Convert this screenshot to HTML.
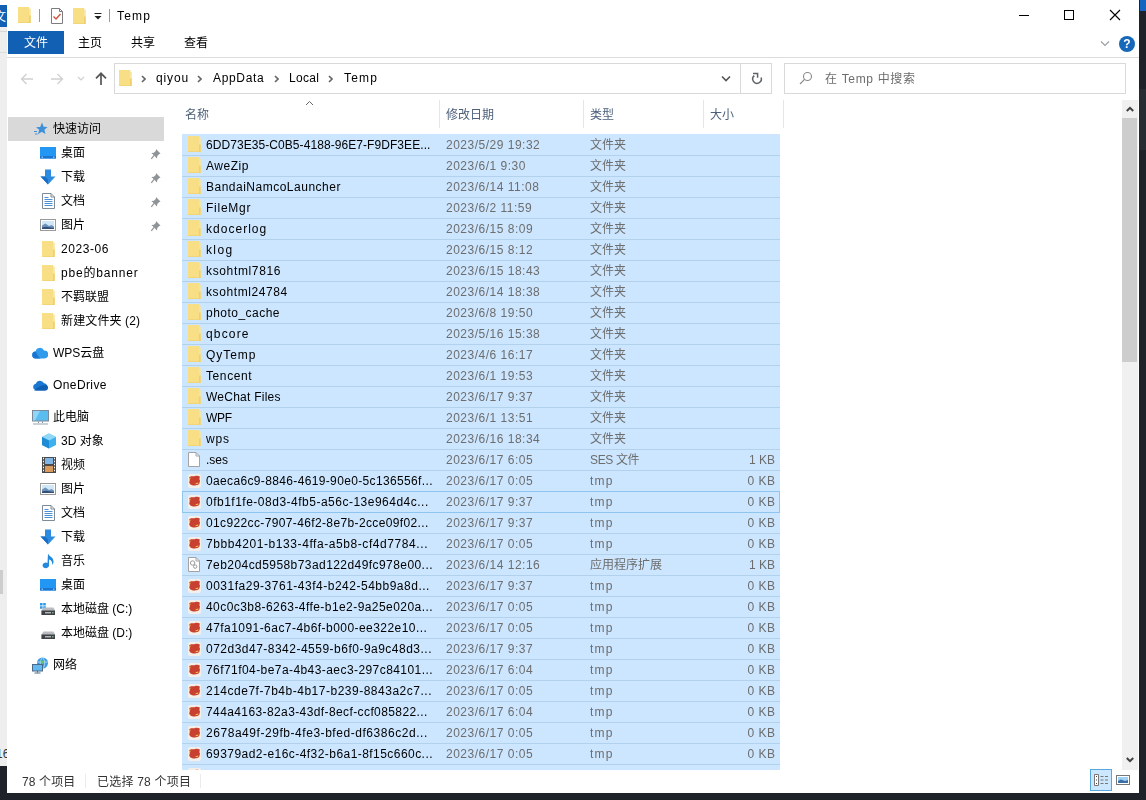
<!DOCTYPE html>
<html lang="zh-CN"><head><meta charset="utf-8"><title>Temp</title>
<style>
html,body{margin:0;padding:0}
body{width:1146px;height:800px;overflow:hidden;position:relative;background:#1f2228;font-family:"Liberation Sans","Noto Sans CJK SC",sans-serif;font-size:12px;color:#000}
div,span,svg{position:absolute;box-sizing:border-box}
.t{white-space:nowrap;line-height:16px;height:16px}
.ic{display:block}
#win{left:7px;top:0;width:1132px;height:793px;background:#fff;overflow:hidden;will-change:transform}
.row{left:176px;width:598px;height:21px;background:#cce6ff}
.sep{left:14px;width:598px;height:1px;background:#b2d1ec}
.row .n{left:24px;top:3px;color:#000}
.row .d{left:264px;top:3px;color:#6d6d6d;letter-spacing:.5px}
.row .y{left:408px;top:3px;color:#6d6d6d}
.row .s{right:5px;top:3px;color:#6d6d6d}
.nav{left:0;width:156px;height:24px}
.nav .t{top:4px}
.hd{top:107px;color:#4c607a}
.vs{top:100px;width:1px;height:28px;background:#e5e5e5}
</style></head><body>

<div style="left:0;top:0;width:7px;height:766px;background:#eeeeee"></div>
<div style="left:0;top:0;width:7px;height:5px;background:#fff"></div>
<div style="left:0;top:5px;width:7px;height:22px;background:#1260b4;overflow:hidden"><span class="t" style="left:-6px;top:4px;color:#fff;font-size:12px">文</span></div>
<div style="left:0;top:31px;width:7px;height:1px;background:#d8d8d8"></div>
<div style="left:0;top:52px;width:7px;height:1px;background:#dcdcdc"></div>
<div style="left:0;top:570px;width:3px;height:24px;background:#cdcdcd"></div>
<div style="left:0;top:748px;width:7px;height:12px;overflow:hidden"><span class="t" style="left:-4px;top:-2px;color:#333;font-size:12px">16</span></div>
<div style="left:1140px;top:0;width:6px;height:11px;background:#1565c0"></div>
<div style="left:1139px;top:89px;width:7px;height:61px;background:#272b32"></div>
<div id="win">
<svg class="ic" style="left:11px;top:7px" width="13" height="16" viewBox="0 0 13 16"><path d="M0 0h11.200v16h-11.200z" fill="#f8df86"/><path d="M11.200 1.500h0.800l0.700 .700v13.800h-1.500z" fill="#f8e295"/><path d="M11 8.500h1.700v7.500h-1.700z" fill="#f1d06a"/><path d="M0 15.300h12.700v.700h-12.700z" fill="#f0d273"/></svg>
<div style="left:32px;top:9px;width:1px;height:13px;background:#9a9a9a"></div>
<svg class="ic" style="left:44px;top:8px" width="12" height="16" viewBox="0 0 12 16"><path d="M0.5 0.5h8l3 3v12h-11z" fill="#fff" stroke="#7d7d7d"/><path d="M8.5 0.5v3h3" fill="none" stroke="#7d7d7d"/><path d="M2.5 8.5l2.5 2.5l4.5-5" fill="none" stroke="#d0503a" stroke-width="1.4"/></svg>
<svg class="ic" style="left:66px;top:8px" width="13" height="16" viewBox="0 0 13 16"><path d="M0 0h11.200v16h-11.200z" fill="#f8df86"/><path d="M11.200 1.500h0.800l0.700 .700v13.800h-1.500z" fill="#f8e295"/><path d="M11 8.500h1.700v7.500h-1.700z" fill="#f1d06a"/><path d="M0 15.300h12.700v.700h-12.700z" fill="#f0d273"/></svg>
<svg class="ic" style="left:87px;top:13px" width="8" height="8" viewBox="0 0 8 8"><path d="M0.5 0.5h7" stroke="#222" stroke-width="1"/><path d="M0.5 3h7l-3.5 3.5z" fill="#222"/></svg>
<div style="left:102px;top:9px;width:1px;height:13px;background:#9a9a9a"></div>
<span class="t" style="left:110px;top:8px;letter-spacing:1.219px">Temp</span>
<svg class="ic" style="left:1011px;top:9px" width="12" height="12" viewBox="0 0 12 12"><path d="M1 6.500h10" stroke="#000" stroke-width="1"/></svg>
<svg class="ic" style="left:1056px;top:9px" width="12" height="12" viewBox="0 0 12 12"><rect x="1.5" y="1.5" width="9" height="9" fill="none" stroke="#000" stroke-width="1"/></svg>
<svg class="ic" style="left:1102px;top:9px" width="12" height="12" viewBox="0 0 12 12"><path d="M1 1l10 10M11 1l-10 10" stroke="#000" stroke-width="1.1"/></svg>
<div style="left:1px;top:31px;width:56px;height:23px;background:#1260b4"></div>
<span class="t" style="left:17px;top:35px;color:#fff">文件</span>
<span class="t" style="left:71px;top:35px">主页</span>
<span class="t" style="left:124px;top:35px">共享</span>
<span class="t" style="left:177px;top:35px">查看</span>
<svg class="ic" style="left:1093px;top:40px" width="10" height="8" viewBox="0 0 10 8"><path d="M1 1.5l4 4l4-4" fill="none" stroke="#9aa0a8" stroke-width="1.2"/></svg>
<div style="left:1112px;top:36px;width:16px;height:16px;border-radius:50%;background:#1668b8;color:#fff;font-weight:bold;font-size:12px;line-height:16px;text-align:center"><span class="t" style="position:static;">?</span></div>
<div style="left:0;top:57px;width:1132px;height:1px;background:#dcdcdc"></div>
<svg class="ic" style="left:13px;top:72px" width="14" height="14" viewBox="0 0 14 14"><path d="M13 7H1.5M6.5 2L1.5 7l5 5" fill="none" stroke="#d0d0d0" stroke-width="1.3"/></svg>
<svg class="ic" style="left:43px;top:72px" width="14" height="14" viewBox="0 0 14 14"><path d="M1 7h11.5M7.5 2l5 5l-5 5" fill="none" stroke="#d0d0d0" stroke-width="1.3"/></svg>
<svg class="ic" style="left:70px;top:76px" width="8" height="6" viewBox="0 0 8 6"><path d="M1 1l3 3l3-3" fill="none" stroke="#d0d0d0" stroke-width="1.2"/></svg>
<svg class="ic" style="left:87px;top:71px" width="14" height="15" viewBox="0 0 14 15"><path d="M7 14V2.500M2 7.300l5-5l5 5" fill="none" stroke="#555" stroke-width="1.700"/></svg>
<div style="left:107px;top:63px;width:627px;height:31px;border:1px solid #d9d9d9;background:#fff"></div>
<div style="left:733px;top:63px;width:32px;height:31px;border:1px solid #d9d9d9;background:#fff"></div>
<svg class="ic" style="left:112px;top:70px" width="13" height="16" viewBox="0 0 13 16"><path d="M0 0h11.200v16h-11.200z" fill="#f8df86"/><path d="M11.200 1.500h0.800l0.700 .700v13.800h-1.500z" fill="#f8e295"/><path d="M11 8.500h1.700v7.500h-1.700z" fill="#f1d06a"/><path d="M0 15.300h12.700v.700h-12.700z" fill="#f0d273"/></svg>
<svg class="ic" style="left:134px;top:75px" width="5" height="8" viewBox="0 0 5 8"><path d="M1 1l3 3l-3 3" fill="none" stroke="#666" stroke-width="1.600"/></svg>
<span class="t" style="left:149px;top:70px;letter-spacing:0.853px">qiyou</span>
<svg class="ic" style="left:190px;top:75px" width="5" height="8" viewBox="0 0 5 8"><path d="M1 1l3 3l-3 3" fill="none" stroke="#666" stroke-width="1.600"/></svg>
<span class="t" style="left:206px;top:70px;letter-spacing:0.667px">AppData</span>
<svg class="ic" style="left:267px;top:75px" width="5" height="8" viewBox="0 0 5 8"><path d="M1 1l3 3l-3 3" fill="none" stroke="#666" stroke-width="1.600"/></svg>
<span class="t" style="left:282px;top:70px;letter-spacing:0.328px">Local</span>
<svg class="ic" style="left:321px;top:75px" width="5" height="8" viewBox="0 0 5 8"><path d="M1 1l3 3l-3 3" fill="none" stroke="#666" stroke-width="1.600"/></svg>
<span class="t" style="left:337px;top:70px;letter-spacing:1.219px">Temp</span>
<svg class="ic" style="left:714px;top:75px" width="10" height="8" viewBox="0 0 10 8"><path d="M1 1.5l4 4l4-4" fill="none" stroke="#555" stroke-width="1.6"/></svg>
<svg class="ic" style="left:743px;top:70px" width="14" height="16" viewBox="0 0 14 16"><path d="M4.300 5.700A4.300 4.300 0 1 0 11.100 7.600" fill="none" stroke="#5f6368" stroke-width="1.500"/><path d="M3 3.500h4.600v4.200" fill="none" stroke="#5f6368" stroke-width="1.500"/></svg>
<div style="left:777px;top:63px;width:342px;height:31px;border:1px solid #d9d9d9;background:#fff"></div>
<svg class="ic" style="left:791.5px;top:70.500px" width="14" height="14" viewBox="0 0 14 14"><circle cx="8.5" cy="5.5" r="4" fill="none" stroke="#8a8a8a" stroke-width="1.1"/><path d="M5.6 8.4L1 13" stroke="#8a8a8a" stroke-width="1.2"/></svg>
<span class="t" style="left:818px;top:71px;color:#6d6d6d;letter-spacing:0.665px">在 Temp 中搜索</span>
<span class="t hd" style="left:178px">名称</span>
<span class="t hd" style="left:439px">修改日期</span>
<span class="t hd" style="left:583px">类型</span>
<span class="t hd" style="left:703px">大小</span>
<div class="vs" style="left:432px"></div>
<div class="vs" style="left:576px"></div>
<div class="vs" style="left:696px"></div>
<div class="vs" style="left:776px"></div>
<svg class="ic" style="left:298px;top:100px" width="9" height="6" viewBox="0 0 9 6"><path d="M1 5l3.500-3.500L8 5" fill="none" stroke="#666" stroke-width="1"/></svg>
<div style="left:1px;top:117px;width:156px;height:23.500px;background:#d9d9d9"></div>
<svg class="ic" style="left:27px;top:122px" width="14" height="14" viewBox="0 0 14 14"><path d="M8 0.5l1.6 4.2l4 .3l-3.2 2.8l1 4.3l-3.6-2.3l-3.8 2.4l1.2-4.4l-3.2-2.6l4.2-.3z" fill="#3d8fd9"/><path d="M0 9.5h3M1 12h2.5" stroke="#3d8fd9" stroke-width="1"/></svg>
<span class="t" style="left:46px;top:121px">快速访问</span>
<svg class="ic" style="left:33px;top:147px" width="16" height="12" viewBox="0 0 16 12"><rect x="0" y="0" width="16" height="11.500" fill="#2196f3"/><rect x="0" y="9" width="16" height="2.500" fill="#1976d2"/><path d="M1.500 10.200h1.500M13 10.200h1.500" stroke="#e3f2fd" stroke-width="0.800"/></svg>
<span class="t" style="left:54px;top:145px">桌面</span>
<svg class="ic" style="left:143px;top:148px" width="12" height="12" viewBox="0 0 11 12"><path d="M5.5 1l4.5 4.5l-1.2.6l-2 2l-.3 2.4l-5.5-5.5l2.4-.3l2-2z" fill="#909498"/><path d="M3.6 7.400L0.800 10.800" stroke="#909498" stroke-width="1.200"/></svg>
<svg class="ic" style="left:33px;top:169px" width="16" height="16" viewBox="0 0 16 16"><path d="M5 0.5h6v7h4.5l-7.5 8l-7.5-8h4.500z" fill="#2f8be0"/><path d="M8 15.500l-7.500-8h4.500l3 3z" fill="#1a6fc4"/></svg>
<span class="t" style="left:54px;top:169px">下载</span>
<svg class="ic" style="left:143px;top:172px" width="12" height="12" viewBox="0 0 11 12"><path d="M5.5 1l4.5 4.5l-1.2.6l-2 2l-.3 2.4l-5.5-5.5l2.4-.3l2-2z" fill="#909498"/><path d="M3.6 7.400L0.800 10.800" stroke="#909498" stroke-width="1.200"/></svg>
<svg class="ic" style="left:35px;top:193px" width="13" height="16" viewBox="0 0 13 16"><path d="M0.5 0.5h8.500l3.500 3.500v11.500h-12z" fill="#fff" stroke="#7f8a96"/><path d="M9 0.5v3.500h3.500" fill="none" stroke="#7f8a96"/><path d="M2.500 4.500h4M2.500 6.500h8M2.500 8.500h8M2.500 10.500h8M2.500 12.500h8" stroke="#4a90d9"/></svg>
<span class="t" style="left:54px;top:193px">文档</span>
<svg class="ic" style="left:143px;top:196px" width="12" height="12" viewBox="0 0 11 12"><path d="M5.5 1l4.5 4.5l-1.2.6l-2 2l-.3 2.4l-5.5-5.5l2.4-.3l2-2z" fill="#909498"/><path d="M3.6 7.400L0.800 10.800" stroke="#909498" stroke-width="1.200"/></svg>
<svg class="ic" style="left:33px;top:219px" width="16" height="12" viewBox="0 0 16 12"><rect x="0.500" y="0.500" width="15" height="11" fill="#fff" stroke="#9a9a9a"/><rect x="2" y="2" width="12" height="8" fill="#cfe7f7"/><path d="M2 10V6.500l3.500-2l3.500 2.500l2.500-1l2.500 1.500v2.500z" fill="#6f93b8"/><path d="M2 10v-1.500l4-.8l8 1.300v1z" fill="#2f4f78"/></svg>
<span class="t" style="left:54px;top:217px">图片</span>
<svg class="ic" style="left:143px;top:220px" width="12" height="12" viewBox="0 0 11 12"><path d="M5.5 1l4.5 4.5l-1.2.6l-2 2l-.3 2.4l-5.5-5.5l2.4-.3l2-2z" fill="#909498"/><path d="M3.6 7.400L0.800 10.800" stroke="#909498" stroke-width="1.200"/></svg>
<svg class="ic" style="left:35px;top:241px" width="13" height="16" viewBox="0 0 13 16"><path d="M0 0h11.200v16h-11.200z" fill="#f8df86"/><path d="M11.200 1.500h0.800l0.700 .700v13.800h-1.500z" fill="#f8e295"/><path d="M11 8.500h1.700v7.500h-1.700z" fill="#f1d06a"/><path d="M0 15.300h12.700v.700h-12.700z" fill="#f0d273"/></svg>
<span class="t" style="left:54px;top:241px;letter-spacing:0.577px">2023-06</span>
<svg class="ic" style="left:35px;top:265px" width="13" height="16" viewBox="0 0 13 16"><path d="M0 0h11.200v16h-11.200z" fill="#f8df86"/><path d="M11.200 1.500h0.800l0.700 .700v13.800h-1.500z" fill="#f8e295"/><path d="M11 8.500h1.700v7.500h-1.700z" fill="#f1d06a"/><path d="M0 15.300h12.700v.700h-12.700z" fill="#f0d273"/></svg>
<span class="t" style="left:54px;top:265px;letter-spacing:0.813px">pbe的banner</span>
<svg class="ic" style="left:35px;top:289px" width="13" height="16" viewBox="0 0 13 16"><path d="M0 0h11.200v16h-11.200z" fill="#f8df86"/><path d="M11.200 1.500h0.800l0.700 .700v13.800h-1.500z" fill="#f8e295"/><path d="M11 8.500h1.700v7.500h-1.700z" fill="#f1d06a"/><path d="M0 15.300h12.700v.700h-12.700z" fill="#f0d273"/></svg>
<span class="t" style="left:54px;top:289px">不羁联盟</span>
<svg class="ic" style="left:35px;top:313px" width="13" height="16" viewBox="0 0 13 16"><path d="M0 0h11.200v16h-11.200z" fill="#f8df86"/><path d="M11.200 1.500h0.800l0.700 .700v13.800h-1.500z" fill="#f8e295"/><path d="M11 8.500h1.700v7.500h-1.700z" fill="#f1d06a"/><path d="M0 15.300h12.700v.700h-12.700z" fill="#f0d273"/></svg>
<span class="t" style="left:54px;top:313px;letter-spacing:0.125px">新建文件夹 (2)</span>
<svg class="ic" style="left:25px;top:347px" width="16" height="12" viewBox="0 0 16 12"><path d="M4 11.500a3.500 3.500 0 0 1-.5-7A4.500 4.500 0 0 1 12 3.500a4 4 0 0 1 .5 8z" fill="#2f9bea"/><path d="M4 11.500a3.500 3.500 0 0 1-.5-7c1.500 1 1.500 4.500 5 7z" fill="#1b74cf"/></svg>
<span class="t" style="left:46px;top:345px">WPS云盘</span>
<svg class="ic" style="left:25px;top:380px" width="17" height="11" viewBox="0 0 17 11"><path d="M4 10.500a3.500 3.500 0 0 1-.3-6.800A4.500 4.500 0 0 1 12 3.200a3.800 3.800 0 0 1 1 7.300z" fill="#1a78d2"/><path d="M2 10.500h12a3 3 0 0 0 .5-5.500c-3-.5-8 1-12.500 5.500z" fill="#0f5fb3"/></svg>
<span class="t" style="left:46px;top:377px;letter-spacing:0.402px">OneDrive</span>
<svg class="ic" style="left:25px;top:410px" width="17" height="15" viewBox="0 0 17 15"><rect x="0.500" y="0.500" width="16" height="10.500" fill="#5bbcf0" stroke="#7a8a99"/><path d="M1 1h7l-5 9.500h-2z" fill="#8fd6f8"/><path d="M6.500 11.500v1.500M10.500 11.500v1.500" stroke="#8a96a3"/><path d="M1 14h15" stroke="#9aa4ae"/></svg>
<span class="t" style="left:46px;top:409px">此电脑</span>
<svg class="ic" style="left:34px;top:433px" width="16" height="16" viewBox="0 0 16 16"><path d="M8 0.500l7 3.500v8l-7 3.500l-7-3.500v-8z" fill="#3db1ee"/><path d="M8 0.500l7 3.500l-7 3.500l-7-3.500z" fill="#8fd8f8"/><path d="M8 7.500v8l-7-3.500v-8z" fill="#1e8bd4"/></svg>
<span class="t" style="left:54px;top:433px">3D 对象</span>
<svg class="ic" style="left:35px;top:457px" width="14" height="16" viewBox="0 0 14 16"><rect x="0" y="0" width="14" height="16" fill="#4a4a4a"/><rect x="3" y="1" width="8" height="6" fill="#7fb6e6"/><rect x="3" y="9" width="8" height="6" fill="#d99a5b"/><path d="M1 1.500h1M1 4.500h1M1 7.500h1M1 10.500h1M1 13.500h1M12 1.500h1M12 4.500h1M12 7.500h1M12 10.500h1M12 13.500h1" stroke="#fff" stroke-width="1.500"/></svg>
<span class="t" style="left:54px;top:457px">视频</span>
<svg class="ic" style="left:33px;top:483px" width="16" height="12" viewBox="0 0 16 12"><rect x="0.500" y="0.500" width="15" height="11" fill="#fff" stroke="#9a9a9a"/><rect x="2" y="2" width="12" height="8" fill="#cfe7f7"/><path d="M2 10V6.500l3.500-2l3.500 2.500l2.500-1l2.500 1.500v2.500z" fill="#6f93b8"/><path d="M2 10v-1.500l4-.8l8 1.300v1z" fill="#2f4f78"/></svg>
<span class="t" style="left:54px;top:481px">图片</span>
<svg class="ic" style="left:35px;top:505px" width="13" height="16" viewBox="0 0 13 16"><path d="M0.5 0.5h8.500l3.500 3.500v11.500h-12z" fill="#fff" stroke="#7f8a96"/><path d="M9 0.5v3.500h3.500" fill="none" stroke="#7f8a96"/><path d="M2.500 4.500h4M2.500 6.500h8M2.500 8.500h8M2.500 10.500h8M2.500 12.500h8" stroke="#4a90d9"/></svg>
<span class="t" style="left:54px;top:505px">文档</span>
<svg class="ic" style="left:33px;top:529px" width="16" height="16" viewBox="0 0 16 16"><path d="M5 0.5h6v7h4.5l-7.5 8l-7.5-8h4.500z" fill="#2f8be0"/><path d="M8 15.500l-7.500-8h4.500l3 3z" fill="#1a6fc4"/></svg>
<span class="t" style="left:54px;top:529px">下载</span>
<svg class="ic" style="left:35px;top:553px" width="13" height="16" viewBox="0 0 13 16"><path d="M6 0.500c1 3 5.500 3.500 5.500 8c0 1.500-.5 2.500-1.500 3.500c.8-3-1-5-3-5.500v6a3.200 2.800 0 1 1-1.500-2.500z" fill="#2389dc"/></svg>
<span class="t" style="left:54px;top:553px">音乐</span>
<svg class="ic" style="left:33px;top:579px" width="16" height="12" viewBox="0 0 16 12"><rect x="0" y="0" width="16" height="11.500" fill="#2196f3"/><rect x="0" y="9" width="16" height="2.500" fill="#1976d2"/><path d="M1.500 10.200h1.500M13 10.200h1.500" stroke="#e3f2fd" stroke-width="0.800"/></svg>
<span class="t" style="left:54px;top:577px">桌面</span>
<svg class="ic" style="left:33px;top:603px" width="16" height="13" viewBox="0 0 16 13"><path d="M0 0h2.600v2.600h-2.600zM3.200 0h2.600v2.600h-2.600zM0 3.200h2.600v2.600h-2.600zM3.200 3.200h2.600v2.600h-2.600z" fill="#2e9be8"/><path d="M3.500 4.500h10l1.500 3v4.500h-13.500v-4.500z" fill="#b8bcc0"/><rect x="1.500" y="7.500" width="13.500" height="4.500" fill="#3e4247"/><rect x="5" y="9.300" width="6" height="1" fill="#e8e8e8"/><rect x="12" y="9.300" width="1.500" height="1" fill="#9fe08a"/></svg>
<span class="t" style="left:54px;top:601px">本地磁盘 (C:)</span>
<svg class="ic" style="left:33px;top:631px" width="16" height="9" viewBox="0 0 16 9"><path d="M3.500 0.500h10l1.500 3v4.500h-13.500v-4.500z" fill="#b8bcc0"/><rect x="1.500" y="3.500" width="13.500" height="4.500" fill="#3e4247"/><rect x="5" y="5.300" width="6" height="1" fill="#e8e8e8"/><rect x="12" y="5.300" width="1.500" height="1" fill="#9fe08a"/></svg>
<span class="t" style="left:54px;top:625px">本地磁盘 (D:)</span>
<svg class="ic" style="left:25px;top:657px" width="17" height="17" viewBox="0 0 17 17"><circle cx="10.500" cy="6" r="5.500" fill="#3c9be6"/><path d="M5.500 5h10M10.500 0.500c-3 3-3 8 0 11M10.500 0.500c3 3 3 8 0 11" stroke="#bfe3fa" fill="none" stroke-width="0.800"/><path d="M8 3c1 1 3 0 4 1.500s-1 2.500-2.500 2z" fill="#6fbf73"/><rect x="0.500" y="7.500" width="10" height="6.500" fill="#64b8ef" stroke="#4a6a88"/><path d="M5.500 14v1.500M2.500 16h6" stroke="#4a6a88"/></svg>
<span class="t" style="left:46px;top:657px">网络</span>
<div style="left:161px;top:134px;width:960px;height:636px;overflow:hidden">
<div class="row" style="left:14px;top:0px">
<svg class="ic" style="left:6px;top:2px" width="13" height="16" viewBox="0 0 13 16"><path d="M0 0h11.200v16h-11.200z" fill="#f8df86"/><path d="M11.200 1.500h0.800l0.700 .700v13.800h-1.500z" fill="#f8e295"/><path d="M11 8.500h1.700v7.500h-1.700z" fill="#f1d06a"/><path d="M0 15.300h12.700v.700h-12.700z" fill="#f0d273"/></svg>
<span class="t n" style="letter-spacing:0.069px">6DD73E35-C0B5-4188-96E7-F9DF3EE...</span><span class="t d">2023/5/29 19:32</span><span class="t y" style="">文件夹</span>
</div>
<div class="row" style="left:14px;top:21px">
<svg class="ic" style="left:6px;top:2px" width="13" height="16" viewBox="0 0 13 16"><path d="M0 0h11.200v16h-11.200z" fill="#f8df86"/><path d="M11.200 1.500h0.800l0.700 .700v13.800h-1.500z" fill="#f8e295"/><path d="M11 8.500h1.700v7.500h-1.700z" fill="#f1d06a"/><path d="M0 15.300h12.700v.700h-12.700z" fill="#f0d273"/></svg>
<span class="t n" style="letter-spacing:0.521px">AweZip</span><span class="t d">2023/6/1 9:30</span><span class="t y" style="">文件夹</span>
</div>
<div class="row" style="left:14px;top:42px">
<svg class="ic" style="left:6px;top:2px" width="13" height="16" viewBox="0 0 13 16"><path d="M0 0h11.200v16h-11.200z" fill="#f8df86"/><path d="M11.200 1.500h0.800l0.700 .700v13.800h-1.500z" fill="#f8e295"/><path d="M11 8.500h1.700v7.500h-1.700z" fill="#f1d06a"/><path d="M0 15.300h12.700v.700h-12.700z" fill="#f0d273"/></svg>
<span class="t n" style="letter-spacing:0.499px">BandaiNamcoLauncher</span><span class="t d">2023/6/14 11:08</span><span class="t y" style="">文件夹</span>
</div>
<div class="row" style="left:14px;top:63px">
<svg class="ic" style="left:6px;top:2px" width="13" height="16" viewBox="0 0 13 16"><path d="M0 0h11.200v16h-11.200z" fill="#f8df86"/><path d="M11.200 1.500h0.800l0.700 .700v13.800h-1.500z" fill="#f8e295"/><path d="M11 8.500h1.700v7.500h-1.700z" fill="#f1d06a"/><path d="M0 15.300h12.700v.700h-12.700z" fill="#f0d273"/></svg>
<span class="t n" style="letter-spacing:0.75px">FileMgr</span><span class="t d">2023/6/2 11:59</span><span class="t y" style="">文件夹</span>
</div>
<div class="row" style="left:14px;top:84px">
<svg class="ic" style="left:6px;top:2px" width="13" height="16" viewBox="0 0 13 16"><path d="M0 0h11.200v16h-11.200z" fill="#f8df86"/><path d="M11.200 1.500h0.800l0.700 .700v13.800h-1.500z" fill="#f8e295"/><path d="M11 8.500h1.700v7.500h-1.700z" fill="#f1d06a"/><path d="M0 15.300h12.700v.700h-12.700z" fill="#f0d273"/></svg>
<span class="t n" style="letter-spacing:1.021px">kdocerlog</span><span class="t d">2023/6/15 8:09</span><span class="t y" style="">文件夹</span>
</div>
<div class="row" style="left:14px;top:105px">
<svg class="ic" style="left:6px;top:2px" width="13" height="16" viewBox="0 0 13 16"><path d="M0 0h11.200v16h-11.200z" fill="#f8df86"/><path d="M11.200 1.500h0.800l0.700 .700v13.800h-1.500z" fill="#f8e295"/><path d="M11 8.500h1.700v7.500h-1.700z" fill="#f1d06a"/><path d="M0 15.300h12.700v.700h-12.700z" fill="#f0d273"/></svg>
<span class="t n" style="letter-spacing:1.362px">klog</span><span class="t d">2023/6/15 8:12</span><span class="t y" style="">文件夹</span>
</div>
<div class="row" style="left:14px;top:126px">
<svg class="ic" style="left:6px;top:2px" width="13" height="16" viewBox="0 0 13 16"><path d="M0 0h11.200v16h-11.200z" fill="#f8df86"/><path d="M11.200 1.500h0.800l0.700 .700v13.800h-1.500z" fill="#f8e295"/><path d="M11 8.500h1.700v7.500h-1.700z" fill="#f1d06a"/><path d="M0 15.300h12.700v.700h-12.700z" fill="#f0d273"/></svg>
<span class="t n" style="letter-spacing:0.646px">ksohtml7816</span><span class="t d">2023/6/15 18:43</span><span class="t y" style="">文件夹</span>
</div>
<div class="row" style="left:14px;top:147px">
<svg class="ic" style="left:6px;top:2px" width="13" height="16" viewBox="0 0 13 16"><path d="M0 0h11.200v16h-11.200z" fill="#f8df86"/><path d="M11.200 1.500h0.800l0.700 .700v13.800h-1.500z" fill="#f8e295"/><path d="M11 8.500h1.700v7.500h-1.700z" fill="#f1d06a"/><path d="M0 15.300h12.700v.700h-12.700z" fill="#f0d273"/></svg>
<span class="t n" style="letter-spacing:0.59px">ksohtml24784</span><span class="t d">2023/6/14 18:38</span><span class="t y" style="">文件夹</span>
</div>
<div class="row" style="left:14px;top:168px">
<svg class="ic" style="left:6px;top:2px" width="13" height="16" viewBox="0 0 13 16"><path d="M0 0h11.200v16h-11.200z" fill="#f8df86"/><path d="M11.200 1.500h0.800l0.700 .700v13.800h-1.500z" fill="#f8e295"/><path d="M11 8.500h1.700v7.500h-1.700z" fill="#f1d06a"/><path d="M0 15.300h12.700v.700h-12.700z" fill="#f0d273"/></svg>
<span class="t n" style="letter-spacing:0.478px">photo_cache</span><span class="t d">2023/6/8 19:50</span><span class="t y" style="">文件夹</span>
</div>
<div class="row" style="left:14px;top:189px">
<svg class="ic" style="left:6px;top:2px" width="13" height="16" viewBox="0 0 13 16"><path d="M0 0h11.200v16h-11.200z" fill="#f8df86"/><path d="M11.200 1.500h0.800l0.700 .700v13.800h-1.500z" fill="#f8e295"/><path d="M11 8.500h1.700v7.500h-1.700z" fill="#f1d06a"/><path d="M0 15.300h12.700v.700h-12.700z" fill="#f0d273"/></svg>
<span class="t n" style="letter-spacing:1.162px">qbcore</span><span class="t d">2023/5/16 15:38</span><span class="t y" style="">文件夹</span>
</div>
<div class="row" style="left:14px;top:210px">
<svg class="ic" style="left:6px;top:2px" width="13" height="16" viewBox="0 0 13 16"><path d="M0 0h11.200v16h-11.200z" fill="#f8df86"/><path d="M11.200 1.500h0.800l0.700 .700v13.800h-1.500z" fill="#f8e295"/><path d="M11 8.500h1.700v7.500h-1.700z" fill="#f1d06a"/><path d="M0 15.300h12.700v.700h-12.700z" fill="#f0d273"/></svg>
<span class="t n" style="letter-spacing:0.944px">QyTemp</span><span class="t d">2023/4/6 16:17</span><span class="t y" style="">文件夹</span>
</div>
<div class="row" style="left:14px;top:231px">
<svg class="ic" style="left:6px;top:2px" width="13" height="16" viewBox="0 0 13 16"><path d="M0 0h11.200v16h-11.200z" fill="#f8df86"/><path d="M11.200 1.500h0.800l0.700 .700v13.800h-1.500z" fill="#f8e295"/><path d="M11 8.500h1.700v7.500h-1.700z" fill="#f1d06a"/><path d="M0 15.300h12.700v.700h-12.700z" fill="#f0d273"/></svg>
<span class="t n" style="letter-spacing:0.595px">Tencent</span><span class="t d">2023/6/1 19:53</span><span class="t y" style="">文件夹</span>
</div>
<div class="row" style="left:14px;top:252px">
<svg class="ic" style="left:6px;top:2px" width="13" height="16" viewBox="0 0 13 16"><path d="M0 0h11.200v16h-11.200z" fill="#f8df86"/><path d="M11.200 1.500h0.800l0.700 .700v13.800h-1.500z" fill="#f8e295"/><path d="M11 8.500h1.700v7.500h-1.700z" fill="#f1d06a"/><path d="M0 15.300h12.700v.700h-12.700z" fill="#f0d273"/></svg>
<span class="t n" style="letter-spacing:0.245px">WeChat Files</span><span class="t d">2023/6/17 9:37</span><span class="t y" style="">文件夹</span>
</div>
<div class="row" style="left:14px;top:273px">
<svg class="ic" style="left:6px;top:2px" width="13" height="16" viewBox="0 0 13 16"><path d="M0 0h11.200v16h-11.200z" fill="#f8df86"/><path d="M11.200 1.500h0.800l0.700 .700v13.800h-1.500z" fill="#f8e295"/><path d="M11 8.500h1.700v7.500h-1.700z" fill="#f1d06a"/><path d="M0 15.300h12.700v.700h-12.700z" fill="#f0d273"/></svg>
<span class="t n" style="letter-spacing:-0.28px">WPF</span><span class="t d">2023/6/1 13:51</span><span class="t y" style="">文件夹</span>
</div>
<div class="row" style="left:14px;top:294px">
<svg class="ic" style="left:6px;top:2px" width="13" height="16" viewBox="0 0 13 16"><path d="M0 0h11.200v16h-11.200z" fill="#f8df86"/><path d="M11.200 1.500h0.800l0.700 .700v13.800h-1.500z" fill="#f8e295"/><path d="M11 8.500h1.700v7.500h-1.700z" fill="#f1d06a"/><path d="M0 15.300h12.700v.700h-12.700z" fill="#f0d273"/></svg>
<span class="t n" style="letter-spacing:0.83px">wps</span><span class="t d">2023/6/16 18:34</span><span class="t y" style="">文件夹</span>
</div>
<div class="row" style="left:14px;top:315px">
<svg class="ic" style="left:6px;top:3px" width="12" height="15" viewBox="0 0 12 15"><path d="M0.5 0.5h7.5l3.5 3.5v10.5h-11z" fill="#fff" stroke="#a3a3a3"/><path d="M8 0.5v3.5h3.5" fill="none" stroke="#a3a3a3"/></svg>
<span class="t n" style="letter-spacing:-0.036px">.ses</span><span class="t d">2023/6/17 6:05</span><span class="t y" style="letter-spacing:-0.349px">SES 文件</span>
<span class="t s" style="letter-spacing:-0.005px;margin-right:--0.005px">1 KB</span>
</div>
<div class="row" style="left:14px;top:336px">
<svg class="ic" style="left:6px;top:4px" width="13" height="14" viewBox="0 0 13 14"><rect x="0" y="0" width="13" height="14" rx="2" fill="#f4efe9"/><path d="M1.2 3.2 C3 1.6 5 2.6 6.5 2.2 C8.5 1.6 10.5 1.8 11.8 2.6 L11.4 5.2 L12 6.4 L11.4 9.6 C10 11.6 7 11.8 5 11.4 C3 11.2 1.6 10.2 1.2 8.6 L1.8 6 Z" fill="#c8402f"/><path d="M1 4.2l1.6-.6-.4 1.6z" fill="#f3d04e"/><path d="M7.4 9.4l2.8-.9.2 1.1-2.6.7z" fill="#f3d04e"/></svg>
<span class="t n" style="letter-spacing:0.352px">0aeca6c9-8846-4619-90e0-5c136556f...</span><span class="t d">2023/6/17 0:05</span><span class="t y" style="letter-spacing:1.148px">tmp</span>
<span class="t s" style="letter-spacing:0.495px;margin-right:-0.495px">0 KB</span>
</div>
<div class="row" style="left:14px;top:357px;box-shadow:inset 0 0 0 1px #8fc4ee;height:22px;z-index:2">
<svg class="ic" style="left:6px;top:4px" width="13" height="14" viewBox="0 0 13 14"><rect x="0" y="0" width="13" height="14" rx="2" fill="#f4efe9"/><path d="M1.2 3.2 C3 1.6 5 2.6 6.5 2.2 C8.5 1.6 10.5 1.8 11.8 2.6 L11.4 5.2 L12 6.4 L11.4 9.6 C10 11.6 7 11.8 5 11.4 C3 11.2 1.6 10.2 1.2 8.6 L1.8 6 Z" fill="#c8402f"/><path d="M1 4.2l1.6-.6-.4 1.6z" fill="#f3d04e"/><path d="M7.4 9.4l2.8-.9.2 1.1-2.6.7z" fill="#f3d04e"/></svg>
<span class="t n" style="letter-spacing:0.499px">0fb1f1fe-08d3-4fb5-a56c-13e964d4c...</span><span class="t d">2023/6/17 9:37</span><span class="t y" style="letter-spacing:1.148px">tmp</span>
<span class="t s" style="letter-spacing:0.495px;margin-right:-0.495px">0 KB</span>
</div>
<div class="row" style="left:14px;top:378px">
<svg class="ic" style="left:6px;top:4px" width="13" height="14" viewBox="0 0 13 14"><rect x="0" y="0" width="13" height="14" rx="2" fill="#f4efe9"/><path d="M1.2 3.2 C3 1.6 5 2.6 6.5 2.2 C8.5 1.6 10.5 1.8 11.8 2.6 L11.4 5.2 L12 6.4 L11.4 9.6 C10 11.6 7 11.8 5 11.4 C3 11.2 1.6 10.2 1.2 8.6 L1.8 6 Z" fill="#c8402f"/><path d="M1 4.2l1.6-.6-.4 1.6z" fill="#f3d04e"/><path d="M7.4 9.4l2.8-.9.2 1.1-2.6.7z" fill="#f3d04e"/></svg>
<span class="t n" style="letter-spacing:0.366px">01c922cc-7907-46f2-8e7b-2cce09f02...</span><span class="t d">2023/6/17 9:37</span><span class="t y" style="letter-spacing:1.148px">tmp</span>
<span class="t s" style="letter-spacing:0.495px;margin-right:-0.495px">0 KB</span>
</div>
<div class="row" style="left:14px;top:399px">
<svg class="ic" style="left:6px;top:4px" width="13" height="14" viewBox="0 0 13 14"><rect x="0" y="0" width="13" height="14" rx="2" fill="#f4efe9"/><path d="M1.2 3.2 C3 1.6 5 2.6 6.5 2.2 C8.5 1.6 10.5 1.8 11.8 2.6 L11.4 5.2 L12 6.4 L11.4 9.6 C10 11.6 7 11.8 5 11.4 C3 11.2 1.6 10.2 1.2 8.6 L1.8 6 Z" fill="#c8402f"/><path d="M1 4.2l1.6-.6-.4 1.6z" fill="#f3d04e"/><path d="M7.4 9.4l2.8-.9.2 1.1-2.6.7z" fill="#f3d04e"/></svg>
<span class="t n" style="letter-spacing:0.575px">7bbb4201-b133-4ffa-a5b8-cf4d7784...</span><span class="t d">2023/6/17 0:05</span><span class="t y" style="letter-spacing:1.148px">tmp</span>
<span class="t s" style="letter-spacing:0.495px;margin-right:-0.495px">0 KB</span>
</div>
<div class="row" style="left:14px;top:420px">
<svg class="ic" style="left:6px;top:3px" width="12" height="15" viewBox="0 0 12 15"><path d="M0.5 0.5h7.5l3.5 3.5v10.5h-11z" fill="#fff" stroke="#a3a3a3"/><path d="M8 0.5v3.5h3.5" fill="none" stroke="#a3a3a3"/><circle cx="4.6" cy="6" r="2.2" fill="none" stroke="#9a9a9a" stroke-width="1"/><circle cx="7.2" cy="9.6" r="1.7" fill="none" stroke="#9a9a9a" stroke-width="1"/></svg>
<span class="t n" style="letter-spacing:0.433px">7eb204cd5958b73ad122d49fc978e00...</span><span class="t d">2023/6/14 12:16</span><span class="t y" style="">应用程序扩展</span>
<span class="t s" style="letter-spacing:-0.005px;margin-right:--0.005px">1 KB</span>
</div>
<div class="row" style="left:14px;top:441px">
<svg class="ic" style="left:6px;top:4px" width="13" height="14" viewBox="0 0 13 14"><rect x="0" y="0" width="13" height="14" rx="2" fill="#f4efe9"/><path d="M1.2 3.2 C3 1.6 5 2.6 6.5 2.2 C8.5 1.6 10.5 1.8 11.8 2.6 L11.4 5.2 L12 6.4 L11.4 9.6 C10 11.6 7 11.8 5 11.4 C3 11.2 1.6 10.2 1.2 8.6 L1.8 6 Z" fill="#c8402f"/><path d="M1 4.2l1.6-.6-.4 1.6z" fill="#f3d04e"/><path d="M7.4 9.4l2.8-.9.2 1.1-2.6.7z" fill="#f3d04e"/></svg>
<span class="t n" style="letter-spacing:0.507px">0031fa29-3761-43f4-b242-54bb9a8d...</span><span class="t d">2023/6/17 9:37</span><span class="t y" style="letter-spacing:1.148px">tmp</span>
<span class="t s" style="letter-spacing:0.495px;margin-right:-0.495px">0 KB</span>
</div>
<div class="row" style="left:14px;top:462px">
<svg class="ic" style="left:6px;top:4px" width="13" height="14" viewBox="0 0 13 14"><rect x="0" y="0" width="13" height="14" rx="2" fill="#f4efe9"/><path d="M1.2 3.2 C3 1.6 5 2.6 6.5 2.2 C8.5 1.6 10.5 1.8 11.8 2.6 L11.4 5.2 L12 6.4 L11.4 9.6 C10 11.6 7 11.8 5 11.4 C3 11.2 1.6 10.2 1.2 8.6 L1.8 6 Z" fill="#c8402f"/><path d="M1 4.2l1.6-.6-.4 1.6z" fill="#f3d04e"/><path d="M7.4 9.4l2.8-.9.2 1.1-2.6.7z" fill="#f3d04e"/></svg>
<span class="t n" style="letter-spacing:0.435px">40c0c3b8-6263-4ffe-b1e2-9a25e020a...</span><span class="t d">2023/6/17 0:05</span><span class="t y" style="letter-spacing:1.148px">tmp</span>
<span class="t s" style="letter-spacing:0.495px;margin-right:-0.495px">0 KB</span>
</div>
<div class="row" style="left:14px;top:483px">
<svg class="ic" style="left:6px;top:4px" width="13" height="14" viewBox="0 0 13 14"><rect x="0" y="0" width="13" height="14" rx="2" fill="#f4efe9"/><path d="M1.2 3.2 C3 1.6 5 2.6 6.5 2.2 C8.5 1.6 10.5 1.8 11.8 2.6 L11.4 5.2 L12 6.4 L11.4 9.6 C10 11.6 7 11.8 5 11.4 C3 11.2 1.6 10.2 1.2 8.6 L1.8 6 Z" fill="#c8402f"/><path d="M1 4.2l1.6-.6-.4 1.6z" fill="#f3d04e"/><path d="M7.4 9.4l2.8-.9.2 1.1-2.6.7z" fill="#f3d04e"/></svg>
<span class="t n" style="letter-spacing:0.453px">47fa1091-6ac7-4b6f-b000-ee322e10...</span><span class="t d">2023/6/17 0:05</span><span class="t y" style="letter-spacing:1.148px">tmp</span>
<span class="t s" style="letter-spacing:0.495px;margin-right:-0.495px">0 KB</span>
</div>
<div class="row" style="left:14px;top:504px">
<svg class="ic" style="left:6px;top:4px" width="13" height="14" viewBox="0 0 13 14"><rect x="0" y="0" width="13" height="14" rx="2" fill="#f4efe9"/><path d="M1.2 3.2 C3 1.6 5 2.6 6.5 2.2 C8.5 1.6 10.5 1.8 11.8 2.6 L11.4 5.2 L12 6.4 L11.4 9.6 C10 11.6 7 11.8 5 11.4 C3 11.2 1.6 10.2 1.2 8.6 L1.8 6 Z" fill="#c8402f"/><path d="M1 4.2l1.6-.6-.4 1.6z" fill="#f3d04e"/><path d="M7.4 9.4l2.8-.9.2 1.1-2.6.7z" fill="#f3d04e"/></svg>
<span class="t n" style="letter-spacing:0.49px">072d3d47-8342-4559-b6f0-9a9c48d3...</span><span class="t d">2023/6/17 9:37</span><span class="t y" style="letter-spacing:1.148px">tmp</span>
<span class="t s" style="letter-spacing:0.495px;margin-right:-0.495px">0 KB</span>
</div>
<div class="row" style="left:14px;top:525px">
<svg class="ic" style="left:6px;top:4px" width="13" height="14" viewBox="0 0 13 14"><rect x="0" y="0" width="13" height="14" rx="2" fill="#f4efe9"/><path d="M1.2 3.2 C3 1.6 5 2.6 6.5 2.2 C8.5 1.6 10.5 1.8 11.8 2.6 L11.4 5.2 L12 6.4 L11.4 9.6 C10 11.6 7 11.8 5 11.4 C3 11.2 1.6 10.2 1.2 8.6 L1.8 6 Z" fill="#c8402f"/><path d="M1 4.2l1.6-.6-.4 1.6z" fill="#f3d04e"/><path d="M7.4 9.4l2.8-.9.2 1.1-2.6.7z" fill="#f3d04e"/></svg>
<span class="t n" style="letter-spacing:0.429px">76f71f04-be7a-4b43-aec3-297c84101...</span><span class="t d">2023/6/17 6:04</span><span class="t y" style="letter-spacing:1.148px">tmp</span>
<span class="t s" style="letter-spacing:0.495px;margin-right:-0.495px">0 KB</span>
</div>
<div class="row" style="left:14px;top:546px">
<svg class="ic" style="left:6px;top:4px" width="13" height="14" viewBox="0 0 13 14"><rect x="0" y="0" width="13" height="14" rx="2" fill="#f4efe9"/><path d="M1.2 3.2 C3 1.6 5 2.6 6.5 2.2 C8.5 1.6 10.5 1.8 11.8 2.6 L11.4 5.2 L12 6.4 L11.4 9.6 C10 11.6 7 11.8 5 11.4 C3 11.2 1.6 10.2 1.2 8.6 L1.8 6 Z" fill="#c8402f"/><path d="M1 4.2l1.6-.6-.4 1.6z" fill="#f3d04e"/><path d="M7.4 9.4l2.8-.9.2 1.1-2.6.7z" fill="#f3d04e"/></svg>
<span class="t n" style="letter-spacing:0.51px">214cde7f-7b4b-4b17-b239-8843a2c7...</span><span class="t d">2023/6/17 0:05</span><span class="t y" style="letter-spacing:1.148px">tmp</span>
<span class="t s" style="letter-spacing:0.495px;margin-right:-0.495px">0 KB</span>
</div>
<div class="row" style="left:14px;top:567px">
<svg class="ic" style="left:6px;top:4px" width="13" height="14" viewBox="0 0 13 14"><rect x="0" y="0" width="13" height="14" rx="2" fill="#f4efe9"/><path d="M1.2 3.2 C3 1.6 5 2.6 6.5 2.2 C8.5 1.6 10.5 1.8 11.8 2.6 L11.4 5.2 L12 6.4 L11.4 9.6 C10 11.6 7 11.8 5 11.4 C3 11.2 1.6 10.2 1.2 8.6 L1.8 6 Z" fill="#c8402f"/><path d="M1 4.2l1.6-.6-.4 1.6z" fill="#f3d04e"/><path d="M7.4 9.4l2.8-.9.2 1.1-2.6.7z" fill="#f3d04e"/></svg>
<span class="t n" style="letter-spacing:0.395px">744a4163-82a3-43df-8ecf-ccf085822...</span><span class="t d">2023/6/17 6:04</span><span class="t y" style="letter-spacing:1.148px">tmp</span>
<span class="t s" style="letter-spacing:0.495px;margin-right:-0.495px">0 KB</span>
</div>
<div class="row" style="left:14px;top:588px">
<svg class="ic" style="left:6px;top:4px" width="13" height="14" viewBox="0 0 13 14"><rect x="0" y="0" width="13" height="14" rx="2" fill="#f4efe9"/><path d="M1.2 3.2 C3 1.6 5 2.6 6.5 2.2 C8.5 1.6 10.5 1.8 11.8 2.6 L11.4 5.2 L12 6.4 L11.4 9.6 C10 11.6 7 11.8 5 11.4 C3 11.2 1.6 10.2 1.2 8.6 L1.8 6 Z" fill="#c8402f"/><path d="M1 4.2l1.6-.6-.4 1.6z" fill="#f3d04e"/><path d="M7.4 9.4l2.8-.9.2 1.1-2.6.7z" fill="#f3d04e"/></svg>
<span class="t n" style="letter-spacing:0.547px">2678a49f-29fb-4fe3-bfed-df6386c2d...</span><span class="t d">2023/6/17 0:05</span><span class="t y" style="letter-spacing:1.148px">tmp</span>
<span class="t s" style="letter-spacing:0.495px;margin-right:-0.495px">0 KB</span>
</div>
<div class="row" style="left:14px;top:609px">
<svg class="ic" style="left:6px;top:4px" width="13" height="14" viewBox="0 0 13 14"><rect x="0" y="0" width="13" height="14" rx="2" fill="#f4efe9"/><path d="M1.2 3.2 C3 1.6 5 2.6 6.5 2.2 C8.5 1.6 10.5 1.8 11.8 2.6 L11.4 5.2 L12 6.4 L11.4 9.6 C10 11.6 7 11.8 5 11.4 C3 11.2 1.6 10.2 1.2 8.6 L1.8 6 Z" fill="#c8402f"/><path d="M1 4.2l1.6-.6-.4 1.6z" fill="#f3d04e"/><path d="M7.4 9.4l2.8-.9.2 1.1-2.6.7z" fill="#f3d04e"/></svg>
<span class="t n" style="letter-spacing:0.448px">69379ad2-e16c-4f32-b6a1-8f15c660c...</span><span class="t d">2023/6/17 0:05</span><span class="t y" style="letter-spacing:1.148px">tmp</span>
<span class="t s" style="letter-spacing:0.495px;margin-right:-0.495px">0 KB</span>
</div>
<div class="row" style="left:14px;top:630px"><svg class="ic" style="left:6px;top:4px" width="13" height="14" viewBox="0 0 13 14"><rect x="0" y="0" width="13" height="14" rx="2" fill="#f4efe9"/><path d="M1.2 3.2 C3 1.6 5 2.6 6.5 2.2 C8.5 1.6 10.5 1.8 11.8 2.6 L11.4 5.2 L12 6.4 L11.4 9.6 C10 11.6 7 11.8 5 11.4 C3 11.2 1.6 10.2 1.2 8.6 L1.8 6 Z" fill="#c8402f"/><path d="M1 4.2l1.6-.6-.4 1.6z" fill="#f3d04e"/><path d="M7.4 9.4l2.8-.9.2 1.1-2.6.7z" fill="#f3d04e"/></svg></div>
<div class="sep" style="top:21px"></div>
<div class="sep" style="top:42px"></div>
<div class="sep" style="top:63px"></div>
<div class="sep" style="top:84px"></div>
<div class="sep" style="top:105px"></div>
<div class="sep" style="top:126px"></div>
<div class="sep" style="top:147px"></div>
<div class="sep" style="top:168px"></div>
<div class="sep" style="top:189px"></div>
<div class="sep" style="top:210px"></div>
<div class="sep" style="top:231px"></div>
<div class="sep" style="top:252px"></div>
<div class="sep" style="top:273px"></div>
<div class="sep" style="top:294px"></div>
<div class="sep" style="top:315px"></div>
<div class="sep" style="top:336px"></div>
<div class="sep" style="top:357px"></div>
<div class="sep" style="top:378px"></div>
<div class="sep" style="top:399px"></div>
<div class="sep" style="top:420px"></div>
<div class="sep" style="top:441px"></div>
<div class="sep" style="top:462px"></div>
<div class="sep" style="top:483px"></div>
<div class="sep" style="top:504px"></div>
<div class="sep" style="top:525px"></div>
<div class="sep" style="top:546px"></div>
<div class="sep" style="top:567px"></div>
<div class="sep" style="top:588px"></div>
<div class="sep" style="top:609px"></div>
<div class="sep" style="top:630px"></div>
</div>
<div style="left:1115px;top:100px;width:16px;height:670px;background:#f0f0f0"></div>
<div style="left:1115px;top:118px;width:15px;height:244px;background:#cdcdcd"></div>
<svg class="ic" style="left:1119px;top:106px" width="8" height="6" viewBox="0 0 8 6"><path d="M0.800 5l3.200-3.200L7.200 5" fill="none" stroke="#404040" stroke-width="2"/></svg>
<svg class="ic" style="left:1119px;top:757px" width="8" height="6" viewBox="0 0 8 6"><path d="M0.800 1l3.200 3.200L7.200 1" fill="none" stroke="#404040" stroke-width="2"/></svg>
<div style="left:0;top:770px;width:1132px;height:23px;background:#fff"></div>
<span class="t" style="left:15px;top:774px;color:#333;letter-spacing:0.124px">78 个项目</span>
<div style="left:78px;top:774px;width:1px;height:14px;background:#ebebeb"></div>
<span class="t" style="left:90px;top:774px;color:#333;letter-spacing:0.22px">已选择 78 个项目</span>
<div style="left:193px;top:774px;width:1px;height:14px;background:#ebebeb"></div>
<div style="left:1083px;top:769px;width:22px;height:22px;background:#cce8ff;border:1px solid #5aa7e0"></div>
<svg class="ic" style="left:1087px;top:774px" width="15" height="12" viewBox="0 0 15 12"><path d="M0.500 0.500h4v11h-4z" fill="#fff" stroke="#777"/><path d="M2 2.500h1M2 6h1M2 9.500h1" stroke="#444"/><path d="M6.500 2.500h3M11 2.500h3M6.500 6h3M11 6h3M6.500 9.500h3M11 9.500h3" stroke="#777"/></svg>
<svg class="ic" style="left:1109px;top:775px" width="14" height="10" viewBox="0 0 14 10"><rect x="0.500" y="0.500" width="13" height="9" fill="#fff" stroke="#777"/><rect x="2" y="2" width="10" height="6" fill="#9fd0f5"/><path d="M2 8V6l3-1.500l4 1.500l3-1v3z" fill="#3b6ea5"/></svg>
</div>
</body></html>
